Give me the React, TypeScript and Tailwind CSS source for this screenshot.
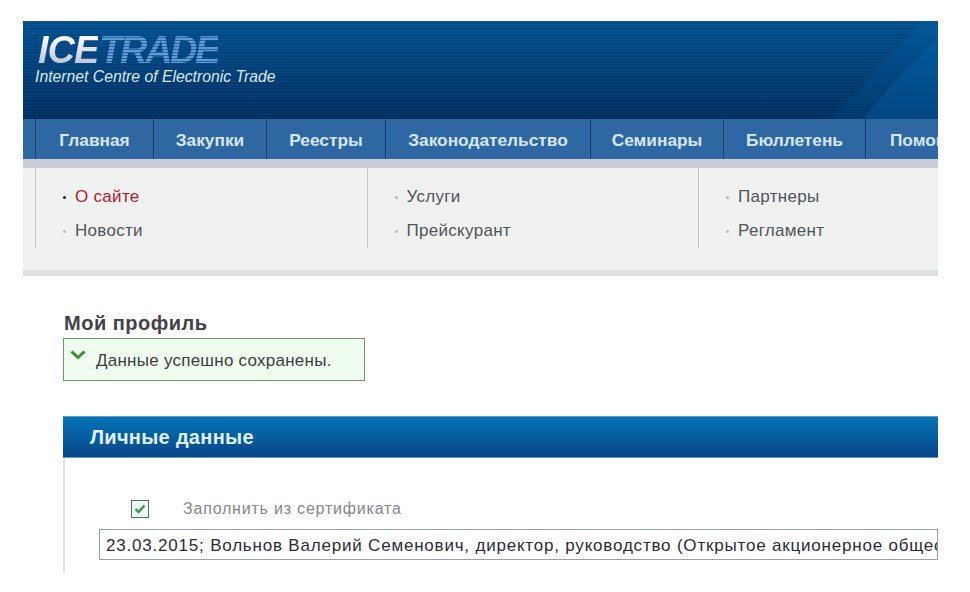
import React from "react";

const tabs = [
  { label: "Главная", w: "w-[118px]" },
  { label: "Закупки", w: "w-[113px]" },
  { label: "Реестры", w: "w-[119px]" },
  { label: "Законодательство", w: "w-[205px]" },
  { label: "Семинары", w: "w-[133px]" },
  { label: "Бюллетень", w: "w-[142px]" },
  { label: "Помощь", w: "w-[120px]" },
];

const cols = [
  [{ t: "О сайте", active: true }, { t: "Новости" }],
  [{ t: "Услуги" }, { t: "Прейскурант" }],
  [{ t: "Партнеры" }, { t: "Регламент" }],
];

export default function App() {
  return (
    <div className="h-[592px] w-[970px] overflow-hidden bg-white pl-[23px] pt-[21px] font-['Liberation_Sans',Arial,sans-serif]">
      <div className="w-[915px] overflow-hidden">
        {/* Banner */}
        <div className="relative h-[98px] overflow-hidden bg-gradient-to-b from-[#00508f] via-[#023f78] to-[#022f60] pl-[12px] pt-[14px]">
          <div className="absolute inset-0 bg-[repeating-linear-gradient(180deg,rgba(255,255,255,0.03)_0px,rgba(255,255,255,0.03)_1px,transparent_1px,transparent_3px)]" />
          <svg className="absolute right-0 top-0" width="120" height="98" viewBox="0 0 120 98">
            <defs>
              <linearGradient id="sw" x1="0" y1="0" x2="0" y2="1">
                <stop offset="0" stopColor="#005a9c" />
                <stop offset="1" stopColor="#023a72" />
              </linearGradient>
            </defs>
            <path d="M105 0 C 78 30 42 68 12 98 L120 98 L120 0 Z" fill="url(#sw)" opacity="0.8" />
            <path d="M120 19 C 95 40 68 70 45 98 L120 98 Z" fill="#0664a8" opacity="0.35" />
          </svg>
          <div className="relative">
            <div className="flex h-[31px] items-center pl-[3px] text-[38px] font-bold italic leading-[31px] tracking-[-1px]">
              <span className="bg-gradient-to-b from-white to-[#b9c3d6] bg-clip-text text-transparent">ICE</span>
              <span className="bg-[repeating-linear-gradient(180deg,#5f9bd4_0px,#5f9bd4_2px,#2a62a2_2px,#2a62a2_3px)] bg-clip-text pl-[1px] tracking-[-2.5px] text-transparent">TRADE</span>
            </div>
            <div className="mt-[2px] text-[15.75px] italic leading-[18px] text-[#dbe6f2]">
              Internet Centre of Electronic Trade
            </div>
          </div>
        </div>

        {/* Tabs */}
        <div className="flex h-[40px] bg-[#2f67a3] pl-[12px]">
          {tabs.map((tab) => (
            <div
              key={tab.label}
              className={`${tab.w} shrink-0 border-l border-l-[#12406f] text-center text-[17.3px] font-bold leading-[42px] text-[#d5e6f5]`}
            >
              {tab.label}
            </div>
          ))}
        </div>
        <div className="h-[9px] bg-[#c9ced6]" />

        {/* Sub menu */}
        <div className="h-[102px] bg-[#f0f2f2] pl-[12px]">
          <div className="flex h-[80px]">
            {cols.map((col, i) => (
              <div key={i} className="w-[331.5px] shrink-0 border-l border-l-[#c4c6c6] pl-[27px] pt-[12px]">
                {col.map((item) => (
                  <div key={item.t} className="flex h-[34px] items-center text-[17px] tracking-[0.3px]">
                    <span className={`mr-[9px] h-[3px] w-[3px] rounded-full ${item.active ? "bg-[#222222]" : "bg-[#b4b8b8]"}`} />
                    <span className={item.active ? "text-[#b01c2c]" : "text-[#50545a]"}>{item.t}</span>
                  </div>
                ))}
              </div>
            ))}
          </div>
        </div>
        <div className="h-[6px] bg-[#dfe1e1]" />

        {/* Content */}
        <div className="pl-[40px]">
          <h1 className="mt-[36px] pl-px text-[20px] font-bold leading-[22px] tracking-[0.5px] text-[#444249]">Мой профиль</h1>
          <div className="mt-[4px] flex h-[43px] w-[302px] border border-[#6f9a62] bg-[#f0fef0]">
            <svg className="ml-[6px] mt-[10px]" width="16" height="12" viewBox="0 0 16 12">
              <path d="M1.5 2.5 L8 8.5 L14.5 2.5" fill="none" stroke="#3f8a3a" strokeWidth="3" />
            </svg>
            <span className="ml-[10px] text-[17px] leading-[44px] tracking-[0.25px] text-[#3b3d42]">Данные успешно сохранены.</span>
          </div>

          <div className="mt-[35px] h-[42px] border-y border-y-[#5f9cc7] bg-gradient-to-b from-[#0374b6] to-[#0a4688] pl-[27px] text-[20px] font-bold leading-[40px] tracking-[0.3px] text-[#dff0fa]">
            Личные данные
          </div>
          <div className="h-[114px] border-l-2 border-l-[#e2e2e2] pl-[34px] pt-[42px]">
            <div className="flex h-[18px] items-center">
              <div className="ml-[32px] flex h-[18px] w-[18px] items-center justify-center border border-[#4f6f72] bg-[#eef8f2]">
                <svg width="12" height="10" viewBox="0 0 12 10">
                  <path d="M1.5 5 L4.5 8 L10.5 1.5" fill="none" stroke="#3b9a45" strokeWidth="2.4" />
                </svg>
              </div>
              <span className="ml-[34px] text-[16px] tracking-[0.8px] text-[#85878c]">Заполнить из сертификата</span>
            </div>
            <div className="mt-[11px] h-[31px] overflow-hidden whitespace-nowrap border border-[#98a4a8] pl-[6px] text-[17px] leading-[31px] tracking-[0.8px] text-[#2c2c34]">
              23.03.2015; Вольнов Валерий Семенович, директор, руководство (Открытое акционерное общество
            </div>
          </div>
        </div>
      </div>
    </div>
  );
}
